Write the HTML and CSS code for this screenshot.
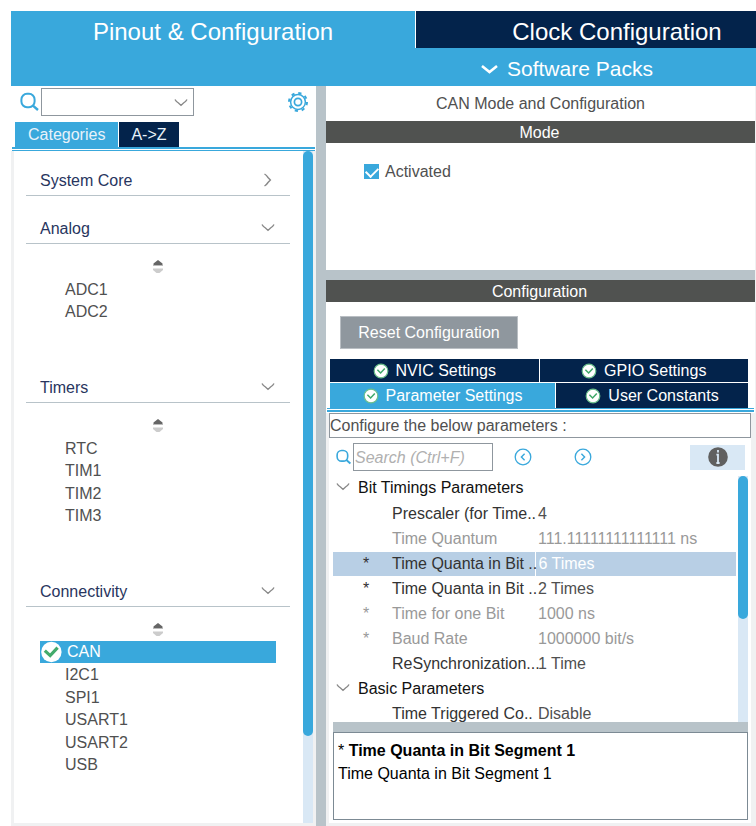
FILE: index.html
```html
<!DOCTYPE html>
<html lang="en">
<head>
<meta charset="utf-8">
<title>Pinout &amp; Configuration</title>
<link rel="stylesheet" href="styles.css">
</head>
<body>
<svg class="defs" aria-hidden="true">
  <symbol id="check" viewBox="0 0 16 16">
    <circle cx="8" cy="8" r="6.8" fill="#fff" stroke="#6cc08d" stroke-width="1.2"/>
    <path d="M4.4 6.8 7.6 10 11.8 5.4" fill="none" stroke="#3fa868" stroke-width="1.5"/>
  </symbol>
  <symbol id="down" viewBox="0 0 14 10">
    <path d="M1 1.5Q2 3.4 4.5 5L7 7.4 9.5 5Q12 3.4 13 1.5" fill="none" stroke="currentColor" stroke-width="1.4"/>
  </symbol>
  <symbol id="lens" viewBox="0 0 20 20">
    <rect x="1.4" y="1.8" width="13.2" height="13.4" rx="5.6" fill="none" stroke="#39a8dc" stroke-width="2"/>
    <path d="M12.6 13.4 18 18" stroke="#39a8dc" stroke-width="2.4"/>
  </symbol>
  <symbol id="sort" viewBox="0 0 12 14">
    <path d="M6 0 10.5 3.6V5H1.5V3.6Z" fill="#666"/>
    <path d="M1 5H11V6H1Z" fill="#bbb"/>
    <path d="M1 8.5H11V10L7.5 13H4.5L1 10Z" fill="#ccc"/>
  </symbol>
</svg>
<header class="top">
  <nav class="top-tabs">
    <button class="top-tab active">Pinout &amp; Configuration</button>
    <button class="top-tab">Clock Configuration</button>
  </nav>
  <div class="packs">
    <button class="packs-button"><svg width="17" height="11" viewBox="0 0 17 11"><path d="M1 2 8.5 8 16 2" fill="none" stroke="#fff" stroke-width="2.6"/></svg>Software Packs</button>
  </div>
</header>
<main class="main">
  <aside class="side">
    <div class="side-tools">
      <label for="find" class="find-label" aria-label="Find"><svg width="20" height="20"><use href="#lens"/></svg></label>
      <span class="combo"><select id="find"><option></option></select><svg width="14" height="10"><use href="#down"/></svg></span>
      <button class="gear" aria-label="Settings">
        <svg width="22" height="22" viewBox="0 0 22 22" fill="none" stroke="#39a8dc">
          <circle cx="11" cy="11" r="9" stroke-width="2" stroke-dasharray="3.2 3.87"/>
          <circle cx="11" cy="11" r="7.4" stroke-width="1.5"/>
          <circle cx="11" cy="11" r="3.6" stroke-width="1.7"/>
        </svg>
      </button>
    </div>
    <nav class="side-tabs">
      <button class="side-tab active">Categories</button>
      <button class="side-tab">A-&gt;Z</button>
    </nav>
    <div class="double-line"></div>
    <div class="side-body">
      <div class="tree">
        <section class="group closed">
          <h2 class="group-head">System Core<svg class="right" width="14" height="10"><use href="#down"/></svg></h2>
        </section>
        <section class="group">
          <h2 class="group-head">Analog<svg width="14" height="10"><use href="#down"/></svg></h2>
          <svg class="sort" width="12" height="14"><use href="#sort"/></svg>
          <ul class="items"><li>ADC1</li><li>ADC2</li></ul>
        </section>
        <section class="group">
          <h2 class="group-head">Timers<svg width="14" height="10"><use href="#down"/></svg></h2>
          <svg class="sort" width="12" height="14"><use href="#sort"/></svg>
          <ul class="items"><li>RTC</li><li>TIM1</li><li>TIM2</li><li>TIM3</li></ul>
        </section>
        <section class="group">
          <h2 class="group-head">Connectivity<svg width="14" height="10"><use href="#down"/></svg></h2>
          <svg class="sort" width="12" height="14"><use href="#sort"/></svg>
          <ul class="items">
            <li class="chosen"><svg width="22" height="22" viewBox="0 0 22 22"><circle cx="11.4" cy="11" r="10.2" fill="#fff"/><path d="M4.8 9.6 10.2 14.6 17.6 6.6" fill="none" stroke="#43ab6c" stroke-width="3.2"/></svg>CAN</li>
            <li>I2C1</li><li>SPI1</li><li>USART1</li><li>USART2</li><li>USB</li>
          </ul>
        </section>
      </div>
      <div class="track"><div class="thumb side-thumb"></div></div>
    </div>
  </aside>
  <div class="content">
    <h1 class="title">CAN Mode and Configuration</h1>
    <h2 class="bar">Mode</h2>
    <div class="mode">
      <label class="activated"><input type="checkbox" checked>Activated</label>
    </div>
    <div class="splitter"></div>
    <h2 class="bar">Configuration</h2>
    <div class="config">
      <button class="reset">Reset Configuration</button>
      <nav class="tabs">
        <div class="tab-row even">
          <button class="tab"><svg width="16" height="16"><use href="#check"/></svg>NVIC Settings</button>
          <button class="tab"><svg width="16" height="16"><use href="#check"/></svg>GPIO Settings</button>
        </div>
        <div class="tab-row uneven">
          <button class="tab active"><svg width="16" height="16"><use href="#check"/></svg>Parameter Settings</button>
          <button class="tab"><svg width="16" height="16"><use href="#check"/></svg>User Constants</button>
        </div>
      </nav>
      <div class="double-line wide"></div>
      <div class="frame">
        <p class="hint">Configure the below parameters :</p>
        <div class="search-row">
          <label for="search" aria-label="Search"><svg width="16" height="16"><use href="#lens"/></svg></label>
          <input id="search" class="search" type="text" placeholder="Search (Ctrl+F)">
          <button class="step" aria-label="Previous"><svg width="18" height="18" viewBox="0 0 18 18" fill="none" stroke="#39a8dc"><circle cx="9" cy="9" r="7.8" stroke-width="1.3"/><path d="M10.6 5.8 7.4 9 10.6 12.2" stroke-width="1.4"/></svg></button>
          <button class="step next" aria-label="Next"><svg width="18" height="18" viewBox="0 0 18 18" fill="none" stroke="#39a8dc"><circle cx="9" cy="9" r="7.8" stroke-width="1.3"/><path d="M7.4 5.8 10.6 9 7.4 12.2" stroke-width="1.4"/></svg></button>
          <button class="info" aria-label="Information"><svg width="20" height="20" viewBox="0 0 20 20"><circle cx="10" cy="10" r="9.8" fill="#606060"/><path d="M10 3V5.4M8.4 7.6H10V16M8.4 16H11.6" stroke="#d9e8f5" stroke-width="1.8" fill="none"/></svg></button>
        </div>
        <div class="params">
          <div class="params-view">
            <table class="table">
              <colgroup><col class="c-mark"><col class="c-name"><col></colgroup>
              <tbody>
                <tr class="head"><th colspan="3"><svg width="14" height="10"><use href="#down"/></svg>Bit Timings Parameters</th></tr>
                <tr><td></td><td>Prescaler (for Time..</td><td>4</td></tr>
                <tr class="off"><td></td><td>Time Quantum</td><td>111.11111111111111 ns</td></tr>
                <tr class="sel"><td>*</td><td>Time Quanta in Bit ..</td><td>6 Times</td></tr>
                <tr><td>*</td><td>Time Quanta in Bit ..</td><td>2 Times</td></tr>
                <tr class="off"><td>*</td><td>Time for one Bit</td><td>1000 ns</td></tr>
                <tr class="off"><td>*</td><td>Baud Rate</td><td>1000000 bit/s</td></tr>
                <tr><td></td><td>ReSynchronization...</td><td>1 Time</td></tr>
                <tr class="head"><th colspan="3"><svg width="14" height="10"><use href="#down"/></svg>Basic Parameters</th></tr>
                <tr><td></td><td>Time Triggered Co..</td><td>Disable</td></tr>
              </tbody>
            </table>
          </div>
          <div class="track"><div class="thumb params-thumb"></div></div>
        </div>
        <div class="splitter inner"></div>
        <div class="detail">
          <p>* <b>Time Quanta in Bit Segment 1</b></p>
          <p>Time Quanta in Bit Segment 1</p>
        </div>
      </div>
    </div>
  </div>
</main>
</body>
</html>
```
FILE: styles.css
```css
:root {
  --blue: #39a8dc;
  --navy: #03234b;
  --steel: #b8c3c9;
  --pale: #d9e8f5;
  --edge: #f0f1f2;
}
* { box-sizing: border-box; }
body {
  margin: 0;
  padding: 11px 0 0 11px;
  min-height: 100vh;
  display: flex;
  flex-direction: column;
  background: #fff;
  color: #505050;
  font: 16px/20px "Liberation Sans", Arial, sans-serif;
}
h1, h2, p, ul { margin: 0; padding: 0; font-size: 16px; font-weight: normal; }
button {
  border: 0;
  padding: 0;
  background: none;
  color: #fff;
  font: inherit;
  cursor: pointer;
}
svg { display: block; flex: none; }
.defs { position: absolute; width: 0; height: 0; }

/* Top navigation */
.top-tabs, .packs { display: grid; grid-template-columns: 405px 1fr; }
.top-tabs { background: var(--navy); }
.top-tab { height: 37px; padding: 4px 0 0 62px; font-size: 24px; line-height: 32px; }
.top-tab.active { background: var(--blue); padding-left: 0; border-right: 1px solid #fff; }
.packs { height: 38px; background: var(--blue); }
.packs-button {
  grid-column: 2;
  display: flex;
  align-items: center;
  gap: 9px;
  padding: 4px 0 0 65px;
  font-size: 21px;
}

.main { flex: 1; display: flex; }

/* Categories */
.side {
  flex: 0 0 315px;
  display: flex;
  flex-direction: column;
  border-right: 10px solid var(--steel);
}
.side-tools { display: flex; height: 36px; padding: 2px 7px 6px 9px; }
.find-label { width: 21px; padding-top: 4px; }
.combo { position: relative; width: 153px; height: 28px; }
.combo select {
  width: 100%;
  height: 100%;
  appearance: none;
  border: 1px solid #8f979e;
  border-radius: 0;
  background: #fff;
  font: inherit;
}
.combo svg { position: absolute; right: 6px; top: 10px; color: #888; pointer-events: none; }
.gear { margin-left: auto; height: 28px; }
.side-tabs { display: flex; gap: 1px; padding-left: 4px; }
.side-tab { height: 25px; padding: 0 12px; background: var(--navy); color: #e8f2fa; }
.side-tab.active { padding: 0 13px; background: var(--blue); }
.double-line { height: 4px; border: solid var(--blue); border-width: 2px 0 1px; margin: 0 1px; }
.side-body {
  flex: 1;
  display: flex;
  border: solid var(--edge);
  border-width: 0 3px 3px 3px;
}
.tree { flex: 1; padding: 0 13px 0 12px; }
.group { padding-bottom: 32px; }
.group.closed { padding: 0; margin-top: -3px; }
.group-head {
  display: flex;
  justify-content: space-between;
  align-items: center;
  padding: 23px 15px 4px 14px;
  border-bottom: 1px solid var(--steel);
  color: #28355e;
}
.group-head svg { color: #888; margin-bottom: 2px; }
.group-head .right { transform: rotate(-90deg); }
.sort { margin: 16px auto 4px; }
.items { display: grid; grid-auto-rows: 23px 22px; padding: 0 14px; list-style: none; }
.items li { display: flex; align-items: center; padding-left: 25px; }
.items .chosen { height: 22px; gap: 5px; padding-left: 0; background: var(--blue); color: #fff; }

.track { flex: none; width: 10px; background: var(--pale); }
.thumb { border-radius: 5px; background: var(--blue); }
.side-thumb { height: 87%; }

/* Configuration */
.content {
  flex: 1;
  min-width: 0;
  display: flex;
  flex-direction: column;
  border-right: 1px solid var(--edge);
}
.title { padding: 8px 0 7px; text-align: center; }
.bar { padding: 2px 2px 0 0; height: 22px; background: #505250; color: #fff; text-align: center; }
.mode { height: 127px; padding: 17px 38px; }
.activated { display: inline-flex; align-items: center; gap: 6px; }
.activated input {
  appearance: none;
  display: grid;
  justify-content: center;
  width: 15px;
  height: 15px;
  margin: 0;
  background: var(--blue);
}
.activated input:checked::after {
  content: "";
  width: 10px;
  height: 6px;
  margin-top: 3px;
  border: solid #fff;
  border-width: 0 0 2px 2px;
  transform: rotate(-45deg);
}
.splitter { flex: none; height: 10px; background: var(--steel); }
.config { flex: 1; display: flex; flex-direction: column; padding-top: 14px; }
.reset {
  align-self: flex-start;
  width: 178px;
  height: 33px;
  margin: 0 0 10px 14px;
  border: 1px solid #b9bec3;
  background: #8f979e;
}
.tabs { display: grid; gap: 1px; padding: 0 7px 0 4px; }
.tab-row { display: grid; gap: 1px; }
.even { grid-template-columns: 1fr 1fr; height: 23px; }
.uneven { grid-template-columns: 225fr 192fr; height: 25px; }
.tab {
  display: flex;
  justify-content: center;
  align-items: center;
  gap: 7px;
  background: var(--navy);
}
.tab.active { background: var(--blue); }
.double-line.wide { border-width: 1px 0 2px; }
.frame {
  flex: 1;
  display: flex;
  flex-direction: column;
  margin-top: 1px;
  padding: 0 0 3px;
  border: solid var(--edge);
  border-width: 0 4px 3px 3px;
}
.hint { height: 25px; padding: 2px 0; border: 1px solid #8f979e; font-size: 16px; }
.search-row { display: flex; align-items: center; height: 38px; padding: 0 6px 0 7px; }
.search {
  width: 140px;
  height: 28px;
  margin-left: 1px;
  padding: 3px 1px 1px;
  border: 1px solid #8f979e;
  font: inherit;
}
.search::placeholder { color: #b0b0b0; font-style: italic; opacity: 1; }
.step { margin-left: 21px; }
.next { margin-left: 42px; }
.info {
  display: grid;
  place-items: center;
  width: 55px;
  height: 25px;
  margin-left: auto;
  background: var(--pale);
}
.params { flex: 1 0 246px; display: flex; padding: 0 3px 0 4px; }
.params-view { flex: 1; height: 246px; margin-right: 2px; overflow: hidden; }
.params-thumb { height: 58%; }
.table { width: 100%; table-layout: fixed; border-collapse: collapse; }
.c-mark { width: 58px; }
.c-name { width: 144px; }
.table td, .table th {
  height: 25px;
  padding: 0;
  border-bottom: 1px solid #fff;
  font-weight: normal;
  text-align: left;
  white-space: nowrap;
}
.table th { color: #111; }
.table th svg { display: inline-block; margin: 0 8px 1px 3px; color: #888; }
.table td:nth-child(1) { padding-left: 30px; color: #333; }
.table td:nth-child(2) { padding-left: 1px; color: #333; }
.table td:nth-child(3) { padding-left: 3px; }
.table .off td:nth-child(n) { color: #999; }
.table .sel { background: #b8cfe5; }
.table .sel td:nth-child(3) { color: #fff; border-left: 1px solid #fff; }
.inner { margin: 0 3px 0 4px; }
.detail {
  height: 88px;
  margin: 0 3px 0 4px;
  padding: 6px 4px;
  border: 1px solid #7c8a94;
  color: #000;
  line-height: 23px;
}
```
